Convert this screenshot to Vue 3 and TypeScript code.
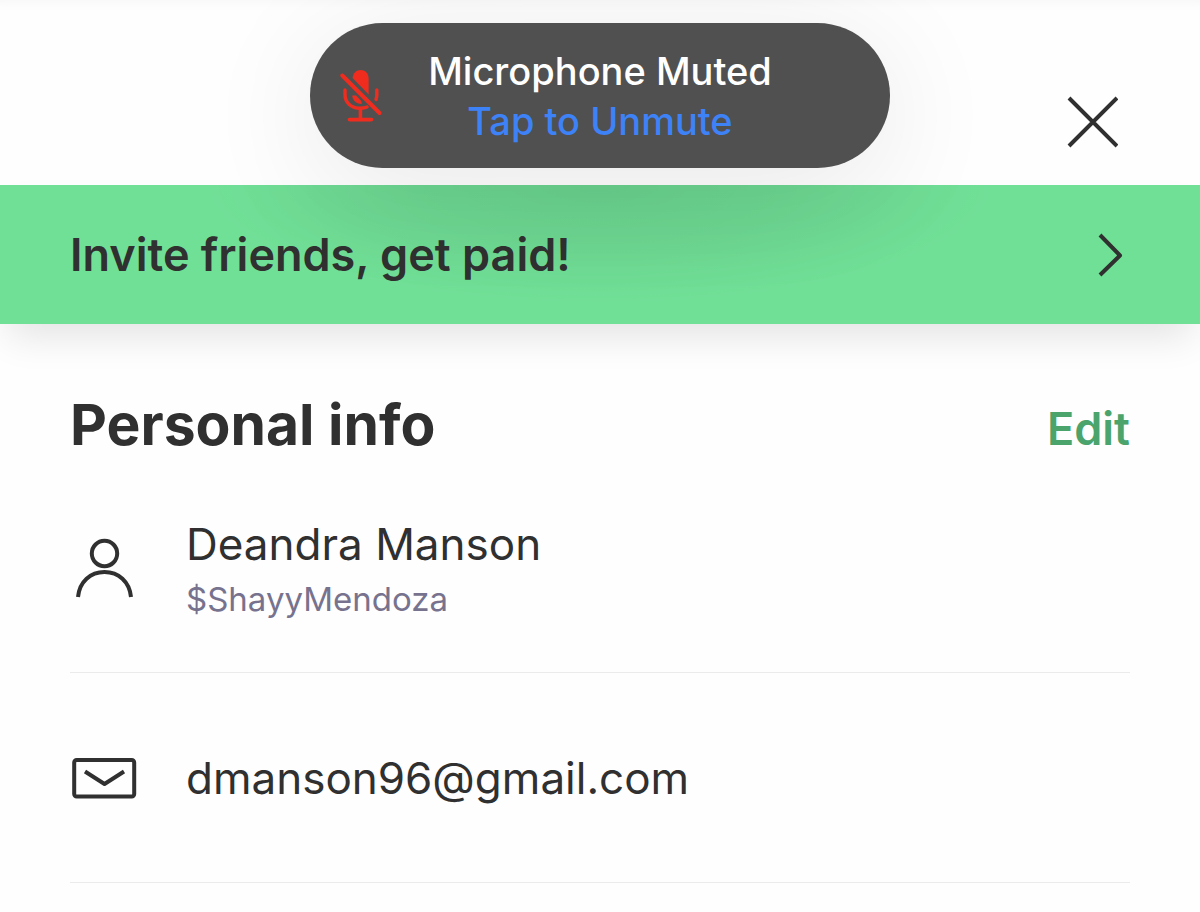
<script setup lang="ts">
interface Row {
  icon: 'person' | 'mail'
  title: string
  subtitle?: string
}

const rows: Row[] = [
  { icon: 'person', title: 'Deandra Manson', subtitle: '$ShayyMendoza' },
  { icon: 'mail', title: 'dmanson96@gmail.com' },
]
</script>

<template>
  <div class="page">
    <header class="topbar">
      <button class="close" type="button" aria-label="Close">
        <svg width="52" height="52" viewBox="0 0 52 52" fill="none" stroke="#303030" stroke-width="4">
          <path d="M3 2 51 50M51 2 3 50" />
        </svg>
      </button>
    </header>

    <div class="toast-layer">
      <button class="toast" type="button">
        <svg class="mic" width="44" height="54" viewBox="0 0 44 54" fill="none" stroke="#f02c1f" stroke-width="3.6" stroke-linecap="round">
          <path d="M12.6 9C13 4 16.200 1 20.600 1S28.600 4.400 28.600 9.500v16z" fill="#f02c1f" stroke="none" />
          <path d="M12.200 26.500H16l5.200 5.400.6 3C16.400 35.200 12.600 31.500 12.200 26.500Z" fill="#f02c1f" stroke="none" />
          <path d="M2.300 6.500 39.500 44" stroke-width="4" />
          <path d="M5 21v4.500c0 8.300 6.100 13.800 15.500 13.800 2.600 0 4.700-.4 6.500-1.300M36.800 21v5c0 1.700-.3 3-.8 4.400" stroke-width="3.400" />
          <path d="M20.400 39.500v11M9.400 50.600h22.200" />
        </svg>
        <span class="toast-text">
          <span>Microphone Muted</span>
          <span class="toast-action">Tap to Unmute</span>
        </span>
      </button>
    </div>

    <a class="invite" href="#invite">
      <span>Invite friends, get paid!</span>
      <svg width="26" height="44" viewBox="0 0 26 44" fill="none" stroke="#303030" stroke-width="4" stroke-linejoin="round">
        <path d="M2 2 22 22.500 2 42" />
      </svg>
    </a>

    <main class="content">
      <div class="section-head">
        <h1>Personal info</h1>
        <a class="edit" href="#edit">Edit</a>
      </div>
      <ul class="rows">
        <li v-for="row in rows" :key="row.title" class="row">
          <svg v-if="row.icon === 'person'" width="68" height="60" viewBox="0 0 68 60" fill="none" stroke="#303030" stroke-width="4">
            <circle cx="34.500" cy="15.500" r="12.700" />
            <path d="M8 59C9.500 43.500 20.500 34 34.500 34S59.500 43.500 61 59" />
          </svg>
          <svg v-else width="68" height="42" viewBox="0 0 68 42" fill="none" stroke="#303030" stroke-width="4" stroke-linejoin="round">
            <rect x="4.200" y="3" width="60" height="36.500" rx="2.500" />
            <path d="M15 14.500 34.500 27 54 14.500" />
          </svg>
          <div class="row-text">
            <div class="row-title">{{ row.title }}</div>
            <div v-if="row.subtitle" class="row-sub">{{ row.subtitle }}</div>
          </div>
        </li>
      </ul>
    </main>
  </div>
</template>

<style>
body {
  background: #fefefe;
}
</style>

<style scoped>
.page {
  position: relative;
  overflow: hidden;
  font-family: Inter, "Liberation Sans", sans-serif;
  color: #303030;
  background: #fefefe;
}
button {
  border: 0;
  padding: 0;
  font: inherit;
  cursor: pointer;
}
a {
  text-decoration: none;
  color: inherit;
}
svg {
  display: block;
  flex: none;
}
.topbar {
  display: flex;
  justify-content: flex-end;
  padding: 96px 82px 37px;
  box-shadow: inset 0 12px 16px -14px rgba(0, 0, 0, 0.06);
}
.close {
  background: none;
}
.toast-layer {
  position: absolute;
  z-index: 2;
  top: 23px;
  left: 0;
  right: 0;
  display: flex;
  justify-content: center;
  pointer-events: none;
}
.toast {
  display: grid;
  grid-template-columns: 44px 1fr 44px;
  align-items: center;
  width: 580px;
  height: 145px;
  padding: 0 30px;
  border-radius: 73px;
  background: #505050;
  color: #fff;
  box-shadow: 0 20px 120px rgba(0, 0, 0, 0.09);
  pointer-events: auto;
}
.toast-text {
  display: flex;
  flex-direction: column;
  font-size: 38px;
  line-height: 50px;
  font-weight: 500;
  white-space: nowrap;
}
.toast-action {
  color: #3e82f7;
}
.invite {
  position: relative;
  display: flex;
  align-items: center;
  justify-content: space-between;
  height: 139px;
  padding: 0 76px 0 70px;
  background: radial-gradient(ellipse 400px 120px at 50% 0, rgba(0, 0, 0, 0.08), rgba(0, 0, 0, 0.05) 45%, transparent) #71e097;
  font-size: 45px;
  font-weight: 600;
  box-shadow: 0 20px 36px -8px rgba(0, 0, 0, 0.11);
}
.content {
  padding: 0 70px;
}
.section-head {
  display: flex;
  align-items: baseline;
  justify-content: space-between;
  padding-top: 65px;
}
h1 {
  margin: 0;
  font-size: 57px;
  line-height: 72px;
  font-weight: 700;
}
.edit {
  color: #4aa46c;
  font-size: 45px;
  font-weight: 600;
}
.rows {
  margin: 0;
  padding: 2px 0 0;
  list-style: none;
}
.row {
  display: flex;
  align-items: center;
  gap: 48px;
  height: 209px;
  border-bottom: 1px solid #ebebeb;
}
.row-title {
  font-size: 44px;
  line-height: 62px;
}
.row-sub {
  font-size: 33px;
  line-height: 48px;
  color: #77738e;
}
</style>
